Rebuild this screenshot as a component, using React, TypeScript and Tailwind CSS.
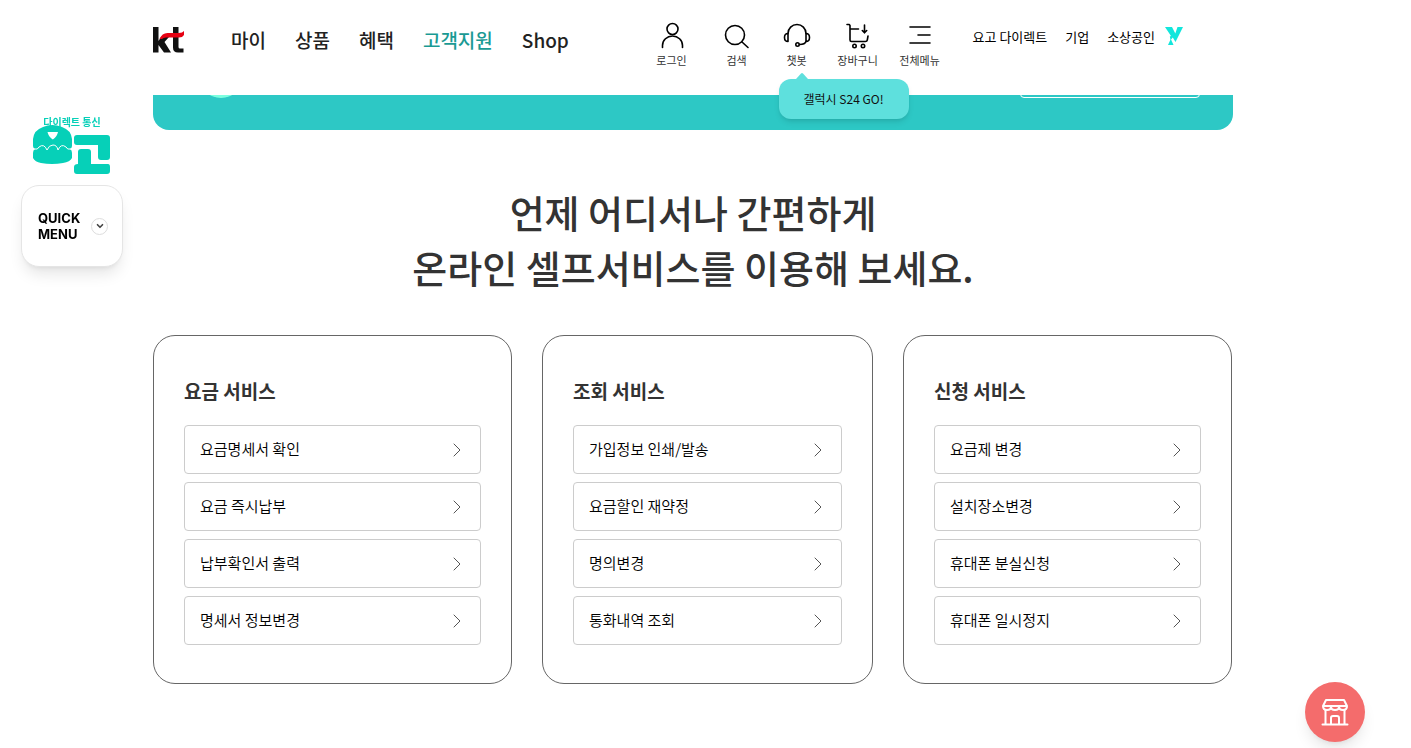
import type { ReactNode } from 'react';
import { ChevronDown, ChevronRight } from 'lucide-react';

interface ServiceGroup {
  title: string;
  items: string[];
}

const mainMenu = ['마이', '상품', '혜택', '고객지원', 'Shop'];
const topLinks = ['요고 다이렉트', '기업', '소상공인'];

const serviceGroups: ServiceGroup[] = [
  { title: '요금 서비스', items: ['요금명세서 확인', '요금 즉시납부', '납부확인서 출력', '명세서 정보변경'] },
  { title: '조회 서비스', items: ['가입정보 인쇄/발송', '요금할인 재약정', '명의변경', '통화내역 조회'] },
  { title: '신청 서비스', items: ['요금제 변경', '설치장소변경', '휴대폰 분실신청', '휴대폰 일시정지'] },
];

const KtLogo = () => (
  <svg viewBox="0 0 32 28" className="h-7 w-8" role="img" aria-label="kt">
    <path d="M0 1h5.500v14L8 11h8l-4.500 5 6.500 10.500h-7L5.500 19v7.500H0z" fill="#111" />
    <path d="M20 1h5.500v20q0 1.500 1.500 1.500h3.500v4H25q-5 0-5-5z" fill="#111" />
    <path d="M6.500 13q2.500-6 8-6h11.500q3.500 0 5-2v4q-1.500 2.500-5 2.500H13q-2.500 0-4 1.500z" fill="#e60012" />
  </svg>
);

const YLogo = () => (
  <svg viewBox="0 0 18 18" className="h-[18px] w-[18px]" role="img" aria-label="Y" fill="#12e6dc">
    <path d="M0 0h7l3.300 6.500L12.500 0H18L10.500 15 7.800 10.500 5.600 13 4.800 9.500 6 9z" />
    <path d="M5.800 12 8.500 18H3z" />
  </svg>
);

const YogoLogo = () => (
  <svg viewBox="0 0 78 50" className="h-[50px] w-[78px]" role="img" aria-label="요고" fill="#06d0b8">
    <path d="M0 14Q1 5 10 2q9-4 19 0 9 3 10 12v7q0 2-2 3 2 1 2 4v5q-2 4-9 5-11 2-22 0-6-1-8-5v-5q0-3 2-4-2-1-2-3z" />
    <path d="M14.500 7h10.500q-1 5-5.200 7.500Q15.500 12 14.500 7z" fill="#fff" />
    <path d="M1 24q4 1 5-2 5-4 8 3 2-5 6-5t5 5q3-7 8-3 1 3 5 2" fill="none" stroke="#fff" strokeWidth="1" />
    <path d="M41 13q0-3 3-3h30q3 0 3 3v19q0 3-3 3h-6q-3 0-3-3V20H44q-3 0-3-3z" />
    <path d="M48 24h7q3 0 3 3v12h17q2 0 2 3v4q0 3-3 3H44q-3 0-3-3v-4q0-3 4-3V27q0-3 3-3z" />
  </svg>
);

const LineIcon = ({ children }: { children: ReactNode }) => (
  <svg
    viewBox="0 0 28 28"
    className="h-7 w-7"
    fill="none"
    stroke="#000"
    strokeWidth="1.600"
    strokeLinecap="round"
    strokeLinejoin="round"
    aria-hidden="true"
  >
    {children}
  </svg>
);

const UserIcon = () => (
  <LineIcon>
    <circle cx="14.500" cy="7" r="5.500" />
    <path d="M4.500 25.500v-2a10 9.500 0 0 1 20 0v2" />
  </LineIcon>
);

const SearchIcon = () => (
  <LineIcon>
    <circle cx="12" cy="13" r="9.500" />
    <path d="m19 20 6 5.500" />
  </LineIcon>
);

const ChatbotIcon = () => (
  <LineIcon>
    <path d="M5 11.500a9 9 0 0 1 18 0" />
    <path d="M5 11.500v8q-3.500 0-3.500-4t3.500-4zM23 11.500v8q3.500 0 3.500-4t-3.500-4z" />
    <path d="M23 19.500q-1 3-6.500 3" />
    <circle cx="14.500" cy="22.500" r="1.700" />
  </LineIcon>
);

const CartIcon = () => (
  <LineIcon>
    <path d="M3 2.500h2.200l.8 1v14.500q0 1.500 1.500 1.500h14q1.500 0 1.800-1.500L24 14M6 7h8.500" />
    <path d="M20.500 3v7.500M18.300 8.500l2.200 2.300 2.200-2.300" />
    <circle cx="10.500" cy="24" r="1.700" />
    <circle cx="19" cy="24" r="1.700" />
  </LineIcon>
);

const MenuIcon = () => (
  <LineIcon>
    <path d="M4 5h20M12 13h12M4 21h20" />
  </LineIcon>
);

const StoreIcon = () => (
  <svg viewBox="0 0 28 28" className="h-7 w-7" fill="none" stroke="#fff" strokeWidth="2" strokeLinejoin="round" strokeLinecap="round" aria-hidden="true">
    <path d="M5 2h18l3 6H2zM2 8q0 4 4 4t4-3.500q0 3.500 4 3.500t4-3.500q0 3.500 4 3.500t4-4" />
    <path d="M4.500 12v14M23.500 12v14M1.500 26.500h25M10 26v-6q0-2 2-2h4q2 0 2 2v6" />
  </svg>
);

const utilities = [
  { label: '로그인', icon: <UserIcon />, className: 'w-[66px]' },
  { label: '검색', icon: <SearchIcon />, className: 'w-16' },
  { label: '챗봇', icon: <ChatbotIcon />, className: 'w-14' },
  { label: '장바구니', icon: <CartIcon />, className: 'w-[66px]' },
  { label: '전체메뉴', icon: <MenuIcon />, className: 'w-[58px]' },
];

const Header = () => (
  <header className="flex h-[95px] items-start justify-between bg-white">
    <div className="flex items-center gap-[46px] pt-[26px]">
      <a href="#home"><KtLogo /></a>
      <nav className="flex gap-[29px] text-[19px] leading-7 font-medium">
        {mainMenu.map(menu => (
          <a key={menu} href="#menu" className={menu === '고객지원' ? 'text-[#1a9a94]' : 'text-[#222]'}>
            {menu}
          </a>
        ))}
      </nav>
    </div>

    <div className="flex pt-[22px]">
      <ul className="flex">
        {utilities.map(({ label, icon, className }) => (
          <li key={label} className={className}>
            <div className="relative">
              <button type="button" className="flex w-full flex-col items-center text-[11px] leading-5 whitespace-nowrap text-[#333]">
                {icon}
                {label}
              </button>
              {label === '챗봇' && (
                <div className="absolute top-[57px] left-2.5 z-10 h-10 w-[130px] rounded-xl bg-[#5ee0dd] text-center text-[12px] leading-10 text-[#111] shadow-md">
                  <svg viewBox="0 0 12 6" className="absolute -top-1.5 left-[17px] h-1.5 w-3" fill="#5ee0dd" aria-hidden="true">
                    <path d="M0 6 5 .5q1-1 2 0L12 6z" />
                  </svg>
                  갤럭시 S24 GO!
                </div>
              )}
            </div>
          </li>
        ))}
      </ul>
      <div className="flex gap-[18px] pt-[5px] pr-[50px] pl-6 text-[13px] leading-5 text-black">
        {topLinks.map(link => (
          <a key={link} href="#site" className="whitespace-nowrap">{link}</a>
        ))}
        <a href="#y" className="-ml-2"><YLogo /></a>
      </div>
    </div>
  </header>
);

const ServiceCard = ({ title, items }: ServiceGroup) => (
  <section className="rounded-[22px] border border-[#666] px-[30px] pt-[41px] pb-[38px]">
    <h3 className="text-[19px] leading-7 font-bold text-[#333]">{title}</h3>
    <ul className="mt-5 flex flex-col gap-2">
      {items.map(item => (
        <li key={item}>
          <a href="#service" className="flex h-[49px] items-center justify-between rounded-[4px] border border-[#ccc] pr-[11px] pl-[15px] text-[15px] font-[350] text-black">
            {item}
            <ChevronRight className="h-6 w-6 text-[#555]" strokeWidth={1} />
          </a>
        </li>
      ))}
    </ul>
  </section>
);

const QuickMenu = () => (
  <aside className="fixed top-[116px] left-[21px] w-[102px]">
    <a href="#yogo" className="flex flex-col items-center text-[10px] leading-3 font-bold text-[#06d0b8]">
      <span>다이렉트 통신</span>
      <span className="-mt-[3px]"><YogoLogo /></span>
    </a>
    <button type="button" className="mt-2.5 flex h-[82px] w-full items-center justify-between rounded-[18px] border border-[#e5e5e5] bg-white pr-3.5 pl-4 text-left font-[Inter,sans-serif] text-[13px] leading-4 font-bold shadow-lg">
      <span>QUICK<br />MENU</span>
      <span className="flex h-[17px] w-[17px] items-center justify-center rounded-full border border-[#ddd]">
        <ChevronDown className="h-2.5 w-2.5 text-[#444]" strokeWidth={4} />
      </span>
    </button>
  </aside>
);

const App = () => (
  <div className="min-h-screen bg-white pr-[25px] font-['Noto_Sans_CJK_KR',sans-serif]">
    <div className="mx-auto max-w-[1080px]">
      <Header />
      <main>
        <section className="flex h-[35px] items-start justify-between overflow-hidden rounded-b-2xl bg-[#2dc8c5] pr-[33px] pl-[46px]">
          <div className="-mt-[41px] h-11 w-11 rounded-full bg-[#7dffe0]" />
          <div className="-mt-[37px] h-10 w-[180px] rounded-[4px] border border-white" />
        </section>

        <h2 className="mt-[54px] text-center text-[38px] leading-[55px] font-medium text-[#333]">
          언제 어디서나 간편하게
          <br />
          온라인 셀프서비스를 이용해 보세요.
        </h2>

        <div className="mt-[41px] grid grid-cols-[359fr_331fr_329fr] gap-[30px] pr-px pb-16">
          {serviceGroups.map(group => (
            <ServiceCard key={group.title} {...group} />
          ))}
        </div>
      </main>
    </div>

    <QuickMenu />
    <button type="button" aria-label="매장" className="fixed right-[46px] bottom-1.5 flex h-[60px] w-[60px] items-center justify-center rounded-full bg-[#f46c6c] shadow-lg">
      <StoreIcon />
    </button>
  </div>
);

export default App;
